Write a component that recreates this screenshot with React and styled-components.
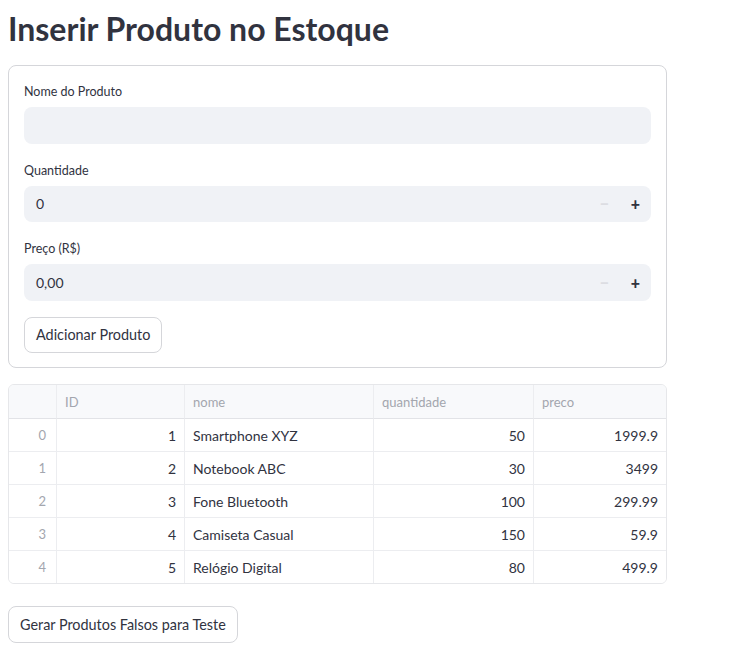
import React from 'react'
import styled, { createGlobalStyle } from 'styled-components'

const Global = createGlobalStyle`
  body {
    margin: 0;
    background: #fff;
    font-family: "Source Sans Pro", Lato, "Noto Sans", sans-serif;
    color: #31333f;
  }
`

const Page = styled.div`
  width: 659px;
  padding: 0 8px;
`

const Title = styled.h1`
  margin: 0;
  padding: 10px 0 17px;
  font-size: 32px;
  font-weight: 700;
  line-height: 38px;
  color: #31333f;
`

const Form = styled.div`
  border: 1px solid #d5d6da;
  border-radius: 8px;
  padding: 15px 15px 14px;
  display: flex;
  flex-direction: column;
`

const Field = styled.div`
  display: flex;
  flex-direction: column;
  margin-bottom: 16px;
`

const Label = styled.label`
  font-size: 12.5px;
  line-height: 16px;
  margin: 3px 0 7px;
  color: #31333f;
`

const InputBox = styled.div`
  height: 36.5px;
  background: #f0f2f6;
  border-radius: 8px;
  display: flex;
  align-items: center;
  padding: 0 0 0 12px;
  font-size: 14px;
  color: #31333f;
`

const Value = styled.span`
  flex: 1;
`

const Step = styled.span`
  width: 31px;
  text-align: center;
  font-size: 16px;
  font-weight: 900;
  color: ${p => (p.disabled ? '#dcdde2' : '#31333f')};
`

const Button = styled.button`
  align-self: flex-start;
  height: 36.5px;
  padding: 0 11px;
  border: 1px solid #d5d6da;
  border-radius: 8px;
  background: #fff;
  font-family: inherit;
  font-size: 14.4px;
  color: #31333f;
`

const Table = styled.div`
  margin-top: 16px;
  border: 1px solid #e6e7ea;
  border-radius: 6px;
  overflow: hidden;
  display: grid;
  grid-template-columns: 48px 128px 189px 160px 1fr;
  font-size: 14px;
`

const Cell = styled.div`
  height: 32px;
  display: flex;
  align-items: center;
  justify-content: ${p => (p.right ? 'flex-end' : 'flex-start')};
  padding: 0 8px;
  border-right: 1px solid #ecedf0;
  border-bottom: 1px solid #ecedf0;
  color: #31333f;
  background: #fff;
  &:nth-child(5n) { border-right: none; }
  &:nth-last-child(-n + 5) { border-bottom: none; }
`

const HeadCell = styled(Cell)`
  height: 33px;
  font-size: 13px;
  color: #a3a6ae;
  background: #f8f9fb;
  border-bottom-color: #e2e3e7;
`

const IndexCell = styled(Cell)`
  padding-right: 10px;
  font-size: 13px;
  color: #a3a6ae;
`

const Bottom = styled(Button)`
  margin-top: 22px;
  margin-bottom: 20px;
`

const rows = [
  [1, 'Smartphone XYZ', 50, '1999.9'],
  [2, 'Notebook ABC', 30, '3499'],
  [3, 'Fone Bluetooth', 100, '299.99'],
  [4, 'Camiseta Casual', 150, '59.9'],
  [5, 'Relógio Digital', 80, '499.9'],
]

function NumberInput({ value }) {
  return (
    <InputBox>
      <Value>{value}</Value>
      <Step disabled>−</Step>
      <Step>+</Step>
    </InputBox>
  )
}

export default function App() {
  return (
    <Page>
      <Global />
      <Title>Inserir Produto no Estoque</Title>
      <Form>
        <Field>
          <Label>Nome do Produto</Label>
          <InputBox />
        </Field>
        <Field>
          <Label>Quantidade</Label>
          <NumberInput value="0" />
        </Field>
        <Field>
          <Label>Preço (R$)</Label>
          <NumberInput value="0,00" />
        </Field>
        <Button>Adicionar Produto</Button>
      </Form>
      <Table>
        <HeadCell />
        <HeadCell>ID</HeadCell>
        <HeadCell>nome</HeadCell>
        <HeadCell>quantidade</HeadCell>
        <HeadCell>preco</HeadCell>
        {rows.map((r, i) => (
          <React.Fragment key={i}>
            <IndexCell right>{i}</IndexCell>
            <Cell right>{r[0]}</Cell>
            <Cell>{r[1]}</Cell>
            <Cell right>{r[2]}</Cell>
            <Cell right>{r[3]}</Cell>
          </React.Fragment>
        ))}
      </Table>
      <Bottom>Gerar Produtos Falsos para Teste</Bottom>
    </Page>
  )
}
